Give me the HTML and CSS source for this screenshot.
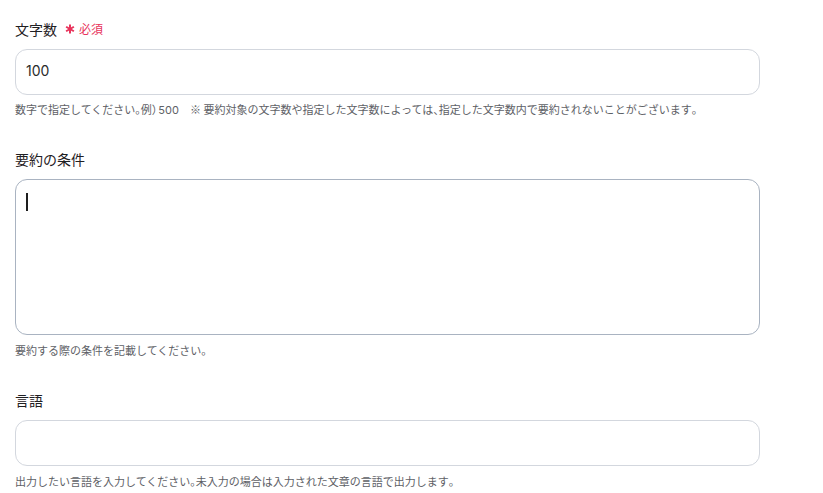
FILE: index.html
```html
<!DOCTYPE html>
<html lang="ja">
<head>
<meta charset="utf-8">
<link rel="stylesheet" href="styles.css">
</head>
<body>
<form class="form">
  <div class="field">
    <label class="label" for="count">文字数 <span class="req"><svg class="star" viewBox="0 0 10 10" width="10" height="10"><g stroke="currentColor" stroke-width="2" stroke-linecap="butt"><line x1="5" y1="0.5" x2="5" y2="9.5"/><line x1="1.1" y1="2.75" x2="8.9" y2="7.25"/><line x1="1.1" y1="7.25" x2="8.9" y2="2.75"/></g></svg>必須</span></label>
    <input class="input" id="count" type="text" value="100">
    <p class="hint">数字で指定してください<span class="h">。</span>例<span class="h">）</span><span class="num">500</span>　※ 要約対象の文字数や指定した文字数によっては<span class="h">、</span>指定した文字数内で要約されないことがございます<span class="h">。</span></p>
  </div>
  <div class="field">
    <label class="label" for="cond">要約の条件</label>
    <div class="area-wrap">
      <textarea class="area" id="cond"></textarea>
      <span class="caret"></span>
    </div>
    <p class="hint hint-lo">要約する際の条件を記載してください<span class="h">。</span></p>
  </div>
  <div class="field">
    <label class="label" for="lang">言語</label>
    <input class="input" id="lang" type="text">
    <p class="hint hint-lo">出力したい言語を入力してください<span class="h">。</span>未入力の場合は入力された文章の言語で出力します<span class="h">。</span></p>
  </div>
</form>
</body>
</html>
```
FILE: styles.css
```css
* { box-sizing: border-box; }
html, body { margin: 0; padding: 0; background: #fff; }
body {
  font-family: "Inter", "Noto Sans CJK JP", sans-serif;
  color: #2e2e2e;
}
.form {
  width: 745px;
  margin: 0 0 0 15px;
  padding-top: 19px;
  display: flex;
  flex-direction: column;
  gap: 32px;
}
.field { display: flex; flex-direction: column; }
.label {
  display: flex;
  align-items: center;
  height: 20px;
  font-family: "Noto Sans CJK JP", sans-serif;
  font-size: 14px;
  line-height: 20px;
  font-weight: 400;
  margin-bottom: 10px;
  color: #1f2023;
}
.req {
  display: inline-flex;
  align-items: center;
  margin-left: 8px;
  color: #e8345c;
  font-size: 12px;
  font-weight: 400;
}
.star { margin-right: 4px; }
.input {
  display: block;
  width: 100%;
  height: 46px;
  border: 1px solid #d3d7de;
  border-radius: 12px;
  padding: 0 10px 3px;
  font-family: "Inter", "Noto Sans CJK JP", sans-serif;
  font-size: 14px;
  color: #2b2b2b;
  outline: none;
  background: #fff;
}
.area-wrap { position: relative; }
.area {
  display: block;
  width: 100%;
  height: 156px;
  border: 1px solid #a9b3c1;
  border-radius: 12px;
  padding: 10px;
  resize: none;
  outline: none;
  font-family: "Inter", "Noto Sans CJK JP", sans-serif;
  font-size: 14px;
}
.caret {
  position: absolute;
  left: 11px;
  top: 14px;
  width: 2px;
  height: 18px;
  background: #1e1e1e;
}
.hint {
  margin: 6px 0 0;
  height: 16px;
  font-family: "Noto Sans CJK JP", sans-serif;
  font-size: 11px;
  line-height: 16px;
  color: #5e6166;
  white-space: nowrap;
}
.hint-lo { margin-top: 7px; }
.hint .h { font-feature-settings: "halt"; }
.hint .num { font-family: "Inter", sans-serif; margin-left: 1px; }
```
